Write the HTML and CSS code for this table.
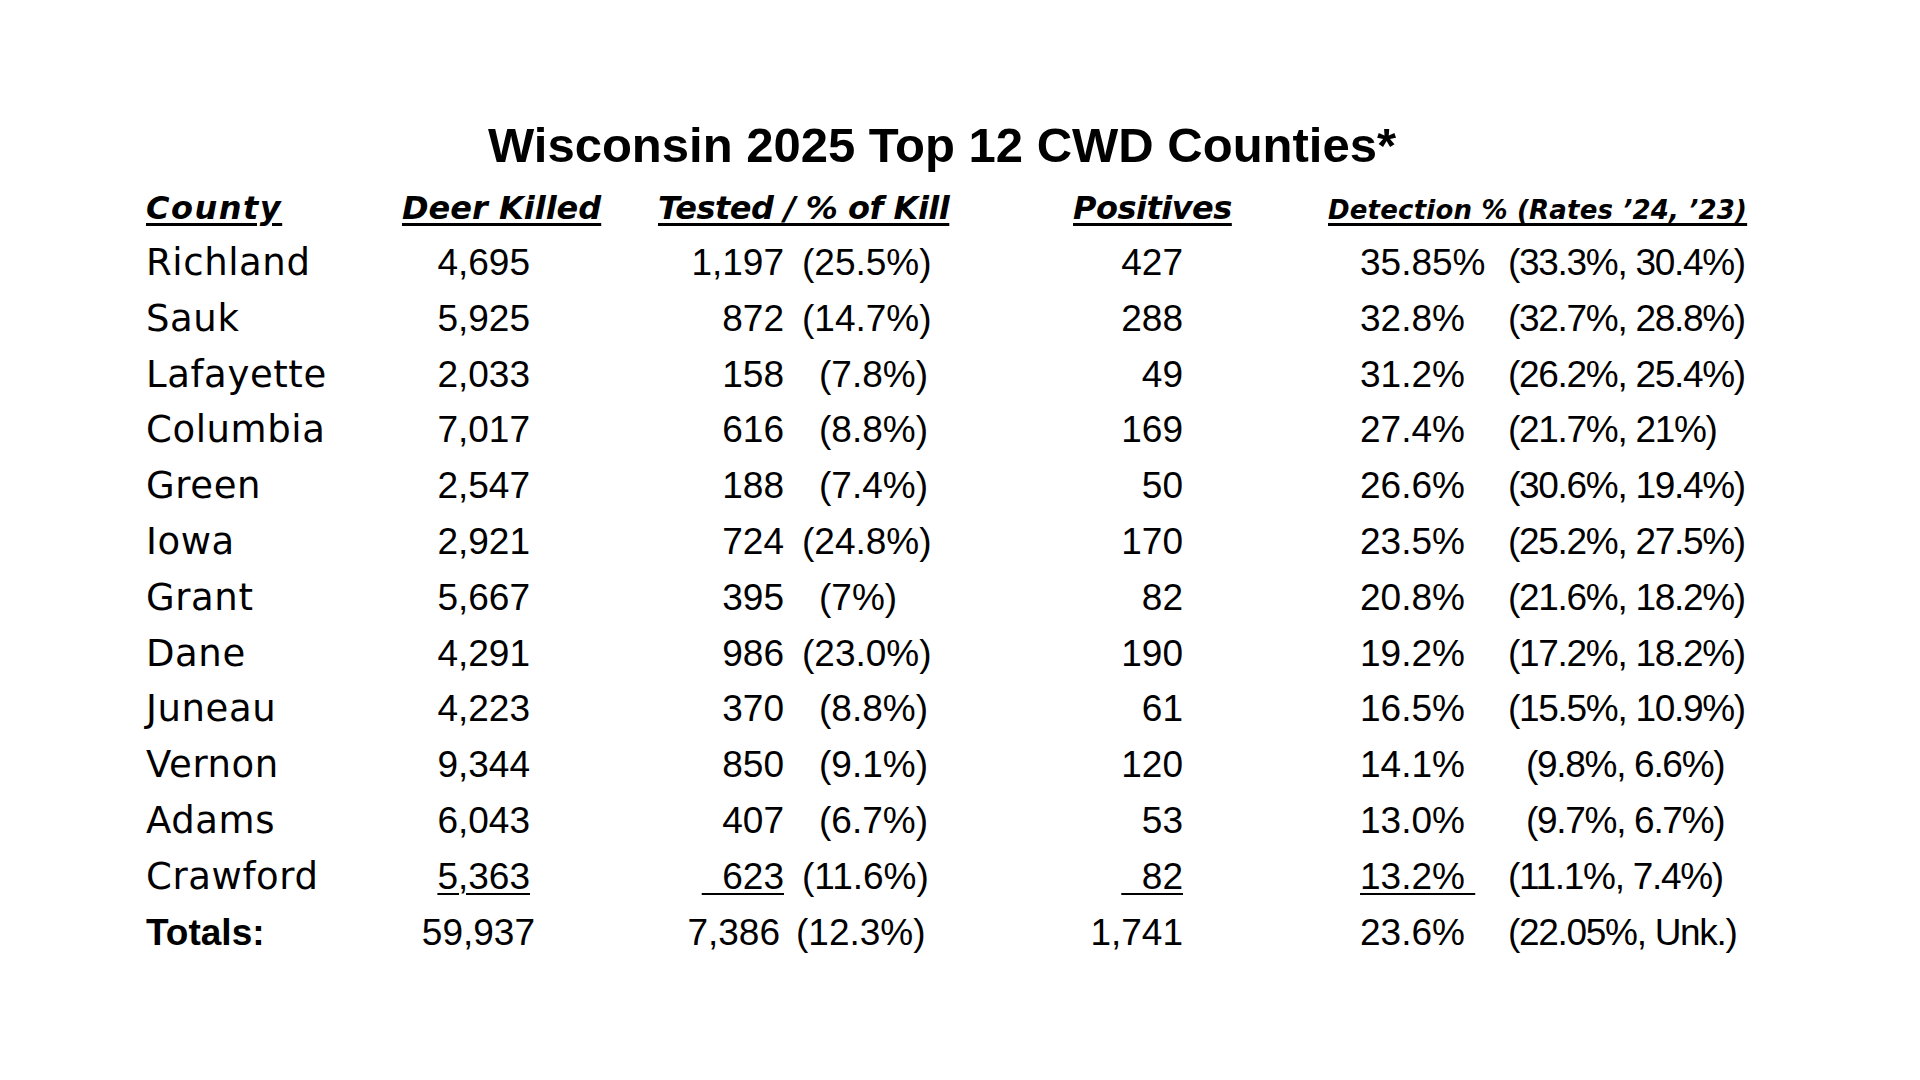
FILE: index.html
```html
<!DOCTYPE html>
<html lang="en">
<head>
<meta charset="utf-8">
<title>Wisconsin 2025 Top 12 CWD Counties</title>
<link rel="stylesheet" href="styles.css">
</head>
<body>
<main class="sheet">
  <h1 class="title">Wisconsin 2025 Top 12 CWD Counties*</h1>
  <div class="table">
    <div class="head">
      <span class="h h-county">County</span>
      <span class="h">Deer Killed</span>
      <span class="h h-tight">Tested / % of Kill</span>
      <span class="h h-tight">Positives</span>
      <span class="h h-small">Detection % (Rates ’24, ’23)</span>
    </div>
    <div class="row"><span class="c-name">Richland</span><span class="c-deer">4,695</span><span class="c-tn">1,197</span><span class="c-tp">(25.5%)</span><span class="c-pos">427</span><span class="c-det">35.85%</span><span class="c-rate">(33.3%, 30.4%)</span></div>
    <div class="row"><span class="c-name">Sauk</span><span class="c-deer">5,925</span><span class="c-tn">872</span><span class="c-tp">(14.7%)</span><span class="c-pos">288</span><span class="c-det">32.8%</span><span class="c-rate">(32.7%, 28.8%)</span></div>
    <div class="row"><span class="c-name">Lafayette</span><span class="c-deer">2,033</span><span class="c-tn">158</span><span class="c-tp pad">(7.8%)</span><span class="c-pos">49</span><span class="c-det">31.2%</span><span class="c-rate">(26.2%, 25.4%)</span></div>
    <div class="row"><span class="c-name">Columbia</span><span class="c-deer">7,017</span><span class="c-tn">616</span><span class="c-tp pad">(8.8%)</span><span class="c-pos">169</span><span class="c-det">27.4%</span><span class="c-rate">(21.7%, 21%)</span></div>
    <div class="row"><span class="c-name">Green</span><span class="c-deer">2,547</span><span class="c-tn">188</span><span class="c-tp pad">(7.4%)</span><span class="c-pos">50</span><span class="c-det">26.6%</span><span class="c-rate">(30.6%, 19.4%)</span></div>
    <div class="row"><span class="c-name">Iowa</span><span class="c-deer">2,921</span><span class="c-tn">724</span><span class="c-tp">(24.8%)</span><span class="c-pos">170</span><span class="c-det">23.5%</span><span class="c-rate">(25.2%, 27.5%)</span></div>
    <div class="row"><span class="c-name">Grant</span><span class="c-deer">5,667</span><span class="c-tn">395</span><span class="c-tp pad">(7%)</span><span class="c-pos">82</span><span class="c-det">20.8%</span><span class="c-rate">(21.6%, 18.2%)</span></div>
    <div class="row"><span class="c-name">Dane</span><span class="c-deer">4,291</span><span class="c-tn">986</span><span class="c-tp">(23.0%)</span><span class="c-pos">190</span><span class="c-det">19.2%</span><span class="c-rate">(17.2%, 18.2%)</span></div>
    <div class="row"><span class="c-name">Juneau</span><span class="c-deer">4,223</span><span class="c-tn">370</span><span class="c-tp pad">(8.8%)</span><span class="c-pos">61</span><span class="c-det">16.5%</span><span class="c-rate">(15.5%, 10.9%)</span></div>
    <div class="row"><span class="c-name">Vernon</span><span class="c-deer">9,344</span><span class="c-tn">850</span><span class="c-tp pad">(9.1%)</span><span class="c-pos">120</span><span class="c-det">14.1%</span><span class="c-rate indent">(9.8%, 6.6%)</span></div>
    <div class="row"><span class="c-name">Adams</span><span class="c-deer">6,043</span><span class="c-tn">407</span><span class="c-tp pad">(6.7%)</span><span class="c-pos">53</span><span class="c-det">13.0%</span><span class="c-rate indent">(9.7%, 6.7%)</span></div>
    <div class="row"><span class="c-name">Crawford</span><span class="c-deer"><span class="ul">5,363</span></span><span class="c-tn"><span class="ul">&nbsp;&nbsp;623</span></span><span class="c-tp">(11.6%)</span><span class="c-pos"><span class="ul">&nbsp;&nbsp;82</span></span><span class="c-det"><span class="ul">13.2%&nbsp;</span></span><span class="c-rate">(11.1%, 7.4%)</span></div>
    <div class="row total"><span class="c-name">Totals:</span><span class="c-deer">59,937</span><span class="c-tn">7,386</span><span class="c-tp">(12.3%)</span><span class="c-pos">1,741</span><span class="c-det">23.6%</span><span class="c-rate">(22.05%, Unk.)</span></div>
  </div>
</main>
</body>
</html>
```

FILE: styles.css
```css
html, body {
  margin: 0;
  padding: 0;
  background: #ffffff;
}

body {
  width: 1920px;
  height: 1080px;
  overflow: hidden;
  color: #000000;
  font-family: "Liberation Sans", Arial, sans-serif;
}

.sheet {
  padding: 117px 0 0 146px;
}

.title {
  margin: 0;
  padding-left: 342px;
  font-family: "Liberation Sans", Arial, sans-serif;
  font-weight: 700;
  font-size: 49px;
  line-height: 56px;
  white-space: nowrap;
}

.table {
  margin-top: 13px;
}

.head {
  display: grid;
  grid-template-columns: 256px 256px 415px 255px auto;
  align-items: baseline;
  margin-bottom: 3px;
  font-family: "DejaVu Sans", sans-serif;
  font-weight: 700;
  font-style: italic;
  font-size: 32px;
  line-height: 44px;
  white-space: nowrap;
}

.h {
  text-decoration: underline;
  text-decoration-thickness: 3px;
  text-underline-offset: 4px;
}

.h-county {
  letter-spacing: 1.5px;
}

.h-tight {
  letter-spacing: -0.5px;
}

.h-small {
  font-size: 26px;
  letter-spacing: 0.2px;
}

.row {
  display: grid;
  grid-template-columns: 254px 130px 254px 266px 133px 325px auto;
  align-items: baseline;
  font-size: 37px;
  line-height: 55.8px;
  white-space: nowrap;
}

.c-name {
  text-align: left;
  font-family: "DejaVu Sans", sans-serif;
  font-size: 37px;
  letter-spacing: 0.6px;
}
.c-deer { text-align: right; }
.c-tn { text-align: right; }
.c-tp { padding-left: 18px; }
.c-tp.pad { padding-left: 35px; }
.c-pos { text-align: right; }
.c-det { padding-left: 177px; }
.c-rate { text-align: left; letter-spacing: -1.3px; }
.c-rate.indent { padding-left: 18px; }

.ul {
  text-decoration: underline;
  text-decoration-thickness: 2px;
  text-underline-offset: 4px;
}

.total .c-name {
  font-family: "Liberation Sans", Arial, sans-serif;
  font-weight: 700;
  letter-spacing: 0;
}

.total .c-deer {
  margin-right: -5px;
}

.total .c-tn {
  margin-right: 4px;
}

.total .c-tp {
  padding-left: 12px;
}
```
